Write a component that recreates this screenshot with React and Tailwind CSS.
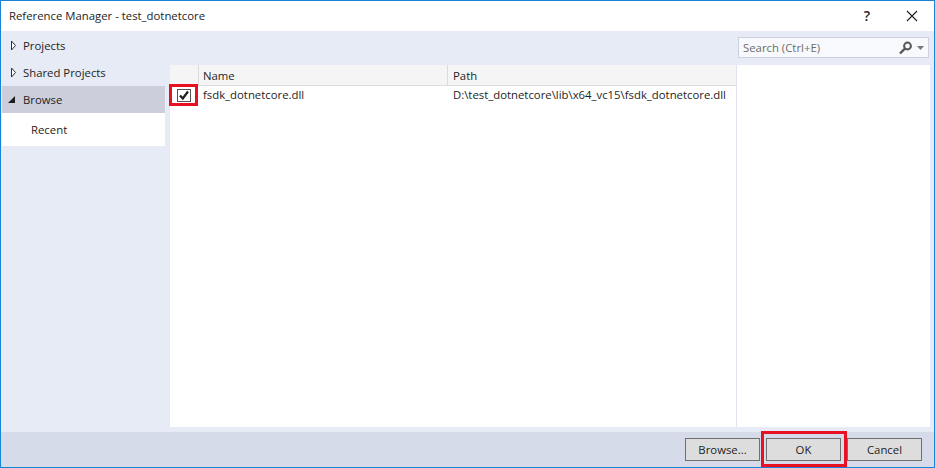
import React from "react";

const font = { fontFamily: '"Open Sans", "Noto Sans", sans-serif' };

function Outline() {
  return (
    <svg width="7" height="11" viewBox="0 0 7 11" className="shrink-0">
      <path d="M1.5 1 L5.5 5.5 L1.5 10 Z" fill="#fff" stroke="#333" strokeWidth="1" />
    </svg>
  );
}

function Filled() {
  return (
    <svg width="9" height="9" viewBox="0 0 9 9" className="shrink-0 mr-[3px]">
      <path d="M8 1 L8 8 L1 8 Z" fill="#1e1e1e" />
    </svg>
  );
}

function NavRow({ label, open }) {
  return (
    <div className={`h-[27px] flex items-center text-[11.35px] text-[#1e1e1e] ${open ? "bg-[#cccedb]" : ""}`}>
      <div className="w-[21px] flex justify-center pl-[1px]">{open ? <Filled /> : <Outline />}</div>
      <span>{label}</span>
    </div>
  );
}

function Btn({ children }) {
  return (
    <div className="w-[75px] h-[23px] bg-[#dddddd] border border-[#707070] flex items-center justify-center text-[11.35px] text-[#1e1e1e]">
      {children}
    </div>
  );
}

export default function App() {
  return (
    <div style={font} className="w-[935px] h-[468px] bg-white border border-[#1883d7] flex flex-col overflow-hidden relative">
      <div className="h-[30px] shrink-0 flex items-center bg-white pl-[8px] text-[11.35px] text-[#1e1e1e]">
        <span>Reference Manager - test_dotnetcore</span>
        <span className="ml-auto mr-[36px] text-[14px] leading-none font-semibold">?</span>
        <svg width="12" height="12" viewBox="0 0 12 12" className="mr-[16px]">
          <path d="M1 1 L11 11 M11 1 L1 11" stroke="#1e1e1e" strokeWidth="1.1" />
        </svg>
      </div>

      <div className="flex-1 min-h-0 bg-[#e6ebf5] flex pl-[1px] pr-[4px]">
        <div className="w-[163px] shrink-0 pt-[1px]">
          <NavRow label="Projects" />
          <NavRow label="Shared Projects" />
          <NavRow label="Browse" open />
          <div className="h-[33px] bg-white flex items-center pl-[29px] text-[11.35px] text-[#1e1e1e]">Recent</div>
        </div>

        <div className="flex-1 min-w-0 ml-[5px] flex flex-col pb-[5px]">
          <div className="h-[34px] shrink-0 flex justify-end items-start pt-[6px] pr-[1px]">
            <div className="w-[191px] h-[21px] bg-[#f8f9fc] border border-[#ccd1dd] flex items-center pl-[4px] pr-[3px] text-[11.35px] text-[#6d6d6d]">
              <span>Search (Ctrl+E)</span>
              <svg width="15" height="14" viewBox="0 0 15 14" className="ml-auto">
                <circle cx="9.5" cy="5" r="3.4" fill="none" stroke="#555" strokeWidth="2" />
                <path d="M7 7.5 L2 12.5" stroke="#555" strokeWidth="2.4" />
              </svg>
              <svg width="7" height="4" viewBox="0 0 7 4" className="ml-[4px] mr-[1px]">
                <path d="M0 0 H7 L3.5 4 Z" fill="#777" />
              </svg>
            </div>
          </div>

          <div className="flex-1 min-h-0 flex bg-white">
            <div className="w-[567px] shrink-0 border-r border-[#dfe3ee] flex flex-col">
              <div className="h-[21px] shrink-0 flex bg-[#f5f5f5] border-b border-[#dcdcdc] text-[11.35px] text-[#1e1e1e]">
                <div className="w-[29px] border-r border-[#dcdcdc]" />
                <div className="w-[249px] border-r border-[#dcdcdc] flex items-center pl-[4px] pt-[2px]">Name</div>
                <div className="flex-1 flex items-center pl-[5px] pt-[2px]">Path</div>
              </div>
              <div className="h-[18px] flex items-center text-[11.35px] text-[#1e1e1e]">
                <div className="w-[29px] flex justify-center pr-[2px] pt-[1px]">
                  <div className="w-[14px] h-[13px] border border-[#555] bg-white flex items-center justify-center">
                    <svg width="12" height="11" viewBox="0 0 12 11">
                      <path d="M2 5.5 L4.8 8.5 L10 1.5" fill="none" stroke="#1e1e1e" strokeWidth="2.2" />
                    </svg>
                  </div>
                </div>
                <div className="w-[250px] pl-[4px] whitespace-nowrap">fsdk_dotnetcore.dll</div>
                <div className="flex-1 pl-[4px] whitespace-nowrap">D:\test_dotnetcore\lib\x64_vc15\fsdk_dotnetcore.dll</div>
              </div>
            </div>
            <div className="flex-1" />
          </div>
        </div>
      </div>

      <div className="h-[35px] shrink-0 bg-[#d6dbe9] flex items-center justify-end gap-[6px] pr-[12px]">
        <Btn>Browse...</Btn>
        <Btn>OK</Btn>
        <Btn>Cancel</Btn>
      </div>

      <div className="absolute left-[168px] top-[83px] w-[29px] h-[22px] border-[3px] border-[#e81123]" />
      <div className="absolute left-[760px] top-[430px] w-[86px] h-[36px] border-[3px] border-[#e81123]" />
    </div>
  );
}
